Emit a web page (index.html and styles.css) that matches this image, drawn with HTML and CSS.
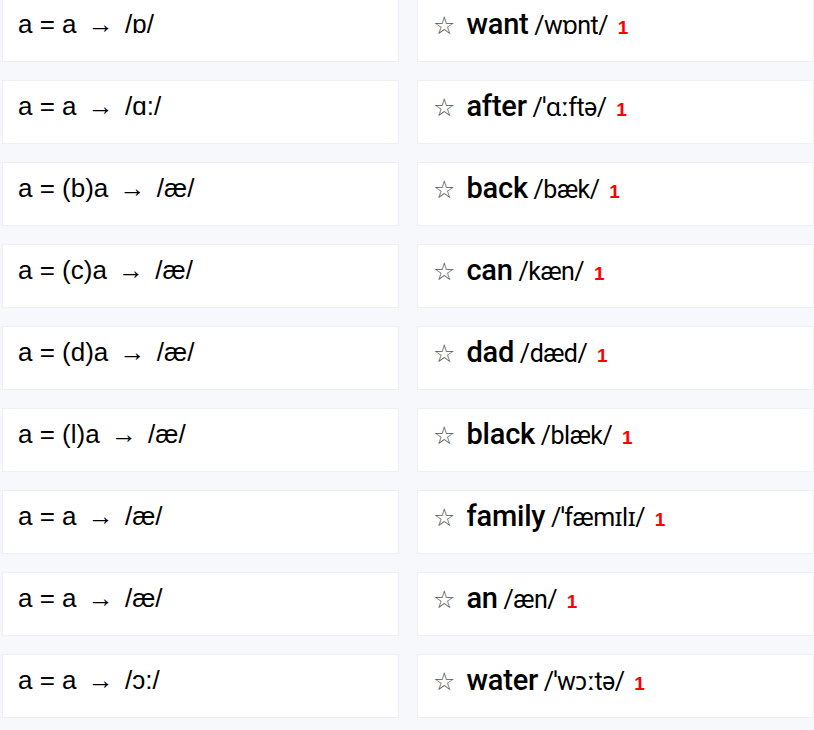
FILE: index.html
```html
<!DOCTYPE html>
<html>
<head>
<meta charset="utf-8">
<link rel="stylesheet" href="styles.css">
</head>
<body>
<div class="grid">
  <div class="card rule">a = a <span class="arr">→</span> /ɒ/</div>
  <div class="card word"><span class="star">☆</span><b>want</b> /wɒnt/ <span class="cnt">1</span></div>
  <div class="card rule">a = a <span class="arr">→</span> /ɑ:/</div>
  <div class="card word"><span class="star">☆</span><b>after</b> /ˈɑːftə/ <span class="cnt">1</span></div>
  <div class="card rule">a = (b)a <span class="arr">→</span> /æ/</div>
  <div class="card word"><span class="star">☆</span><b>back</b> /bæk/ <span class="cnt">1</span></div>
  <div class="card rule">a = (c)a <span class="arr">→</span> /æ/</div>
  <div class="card word"><span class="star">☆</span><b>can</b> /kæn/ <span class="cnt">1</span></div>
  <div class="card rule">a = (d)a <span class="arr">→</span> /æ/</div>
  <div class="card word"><span class="star">☆</span><b>dad</b> /dæd/ <span class="cnt">1</span></div>
  <div class="card rule">a = (l)a <span class="arr">→</span> /æ/</div>
  <div class="card word"><span class="star">☆</span><b>black</b> /blæk/ <span class="cnt">1</span></div>
  <div class="card rule">a = a <span class="arr">→</span> /æ/</div>
  <div class="card word"><span class="star">☆</span><b>family</b> /ˈfæmɪlɪ/ <span class="cnt">1</span></div>
  <div class="card rule">a = a <span class="arr">→</span> /æ/</div>
  <div class="card word"><span class="star">☆</span><b>an</b> /æn/ <span class="cnt">1</span></div>
  <div class="card rule">a = a <span class="arr">→</span> /ɔ:/</div>
  <div class="card word"><span class="star">☆</span><b>water</b> /ˈwɔːtə/ <span class="cnt">1</span></div>
</div>
</body>
</html>
```
FILE: styles.css
```css
html, body { margin: 0; padding: 0; background: #f7f8fc; }
body { overflow: hidden; }
.grid {
  display: grid;
  grid-template-columns: 397px 397px;
  column-gap: 18px;
  row-gap: 18px;
  padding-left: 2px;
  margin-top: -2px;
}
.card {
  box-sizing: border-box;
  height: 64px;
  background: #fff;
  border: 1px solid #eef0f5;
  padding: 10px 0 0 15px;
  line-height: 30px;
  color: #000;
  white-space: pre;
}
.rule { font-family: "Liberation Sans", Arial, sans-serif; font-size: 26px; }
.arr { font-family: "Liberation Sans", "DejaVu Sans", sans-serif; font-size: 26px; margin: 0 4px; }
.word { font-family: Roboto, "Noto Sans", sans-serif; font-size: 25px; letter-spacing: -0.5px; }
.word b { font-weight: 500; font-size: 29px; letter-spacing: -0.2px; }
.star { font-family: "DejaVu Sans", sans-serif; font-size: 25px; letter-spacing: 0; color: #555; margin-right: 11px; }
.cnt { font-family: "Liberation Sans", Arial, sans-serif; color: #f00; font-weight: 700; font-size: 19px; letter-spacing: 0; margin-left: 4px; }
```
